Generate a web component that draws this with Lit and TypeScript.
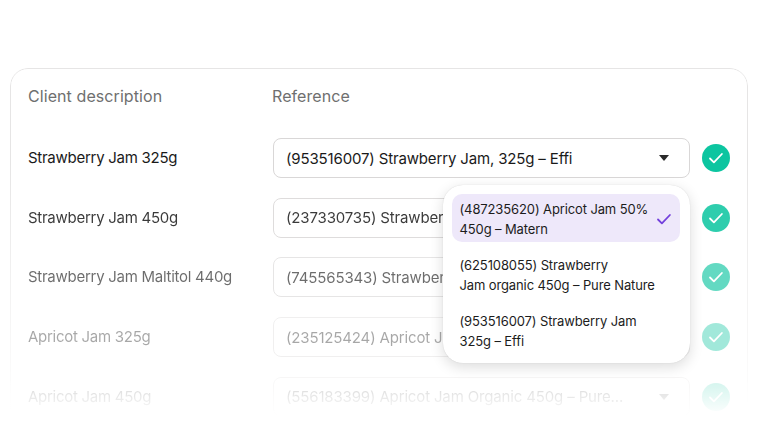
import { LitElement, html, css } from "lit";
import { customElement } from "lit/decorators.js";

const rows = [
  { name: "Strawberry Jam 325g", ref: "(953516007) Strawberry Jam, 325g – Effi", fade: 1 },
  { name: "Strawberry Jam 450g", ref: "(237330735) Strawberry Jam 450g – Effi", fade: 0.86 },
  { name: "Strawberry Jam Maltitol 440g", ref: "(745565343) Strawberry Jam Maltitol 440g", fade: 0.64 },
  { name: "Apricot Jam 325g", ref: "(235125424) Apricot Jam 325g – Effi", fade: 0.38 },
  { name: "Apricot Jam 450g", ref: "(556183399) Apricot Jam Organic 450g – Pure...", fade: 0.2 },
];

const options = [
  { lines: ["(487235620) Apricot Jam 50%", "450g – Matern"], selected: true },
  { lines: ["(625108055) Strawberry", "Jam organic 450g – Pure Nature"], selected: false },
  { lines: ["(953516007) Strawberry Jam", "325g – Effi"], selected: false },
];

@customElement("app-root")
export class AppRoot extends LitElement {
  static styles = css`
    :host {
      display: block;
      position: relative;
      width: 760px;
      height: 432px;
      overflow: hidden;
      background: #fff;
      font-family: Inter, "Liberation Sans", sans-serif;
      color: #1a1a1a;
    }

    .card {
      position: relative;
      box-sizing: border-box;
      margin: 68px 12px 0 10px;
      height: 420px;
      padding: 18px 18px 0 18px;
    }

    /* the outline dies away towards the bottom of the page */
    .card::before {
      content: "";
      position: absolute;
      inset: 0;
      border: 1px solid #e6e5e5;
      border-radius: 18px;
      -webkit-mask-image: linear-gradient(#000 22%, transparent 83%);
      mask-image: linear-gradient(#000 22%, transparent 83%);
    }

    .head {
      display: flex;
      font-size: 16px;
      line-height: 20px;
      letter-spacing: 0.08px;
      color: #6f6f6f;
    }

    .head .left {
      width: 244px;
    }

    .rows {
      display: flex;
      flex-direction: column;
      gap: 19.7px;
      margin-top: 32px;
    }

    .row {
      display: flex;
      align-items: center;
      height: 40px;
    }

    .name {
      width: 245px;
      margin-top: -1px;
      font-size: 15px;
      letter-spacing: -0.27px;
      white-space: nowrap;
    }

    .select {
      box-sizing: border-box;
      display: flex;
      align-items: center;
      justify-content: space-between;
      width: 417px;
      height: 40px;
      padding: 0 20px 0 12px;
      border: 1px solid #d9d7d7;
      border-radius: 8px;
      font-size: 15px;
      letter-spacing: -0.15px;
      white-space: nowrap;
      overflow: hidden;
    }

    .caret {
      flex: none;
      width: 0;
      height: 0;
      border-left: 5.5px solid transparent;
      border-right: 5.5px solid transparent;
      border-top: 6px solid #2a2a2a;
    }

    .ok {
      flex: none;
      display: flex;
      align-items: center;
      justify-content: center;
      width: 28px;
      height: 28px;
      margin-left: 12px;
      border-radius: 50%;
      background: #0cc5a0;
    }

    .fade {
      position: absolute;
      left: 0;
      right: 0;
      top: 376px;
      height: 56px;
      background: linear-gradient(rgba(255, 255, 255, 0), #fff 72%);
    }

    .menu {
      position: absolute;
      box-sizing: border-box;
      left: 443px;
      top: 185px;
      width: 246.5px;
      height: 177.5px;
      padding: 9px 9.5px 9px 9px;
      background: #fff;
      border-radius: 20px;
      box-shadow: 0 4px 14px rgba(0, 0, 0, 0.14), 0 0 1px rgba(0, 0, 0, 0.16);
      font-size: 13px;
      line-height: 20px;
      letter-spacing: -0.12px;
      color: #1c1c1c;
    }

    .option {
      display: flex;
      align-items: center;
      justify-content: space-between;
      padding: 4.5px 8px 3.5px 7.5px;
      margin-bottom: 8px;
      border-radius: 10px;
      white-space: nowrap;
    }

    .option.selected {
      background: #eee8fa;
    }
  `;

  private check(color: string, size: number, weight: number) {
    return html`<svg width=${size} height=${size} viewBox="0 0 16 16" fill="none">
      <path d="M2 8.5l3.9 3.9 8-8.4" stroke=${color} stroke-width=${weight} stroke-linecap="round" stroke-linejoin="round" />
    </svg>`;
  }

  render() {
    return html`
      <div class="card">
        <div class="head">
          <div class="left">Client description</div>
          <div>Reference</div>
        </div>
        <div class="rows">
          ${rows.map(
            (row) => html`
              <div class="row" style="opacity:${row.fade}">
                <div class="name">${row.name}</div>
                <div class="select">
                  <span>${row.ref}</span>
                  <span class="caret"></span>
                </div>
                <div class="ok">${this.check("#fff", 16, 1.8)}</div>
              </div>
            `
          )}
        </div>
      </div>
      <div class="fade"></div>
      <div class="menu">
        ${options.map(
          (opt) => html`
            <div class="option ${opt.selected ? "selected" : ""}">
              <div>${opt.lines.map((line) => html`<div>${line}</div>`)}</div>
              ${opt.selected ? this.check("#7340dc", 16, 1.8) : ""}
            </div>
          `
        )}
      </div>
    `;
  }
}
